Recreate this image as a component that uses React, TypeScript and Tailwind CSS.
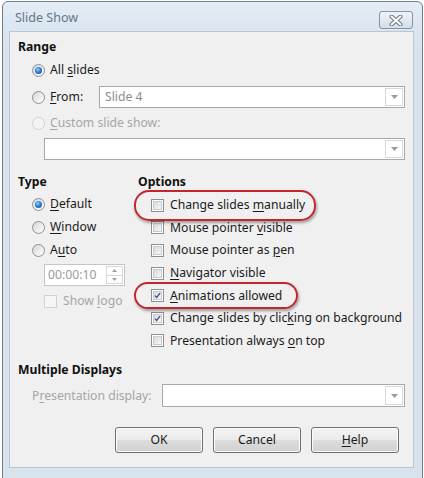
import React from 'react';

// Windows 7 style "Slide Show" dialog

const U = ({ children }: { children: React.ReactNode }) => <span className="underline underline-offset-2">{children}</span>;

function Radio({ checked, disabled, label }: { checked?: boolean; disabled?: boolean; label: React.ReactNode }) {
  return (
    <div className="flex items-center h-[22px]">
      <div
        className={`w-[13px] h-[13px] rounded-full border flex items-center justify-center ${
          disabled ? 'border-[#cfd2d4] bg-[#f4f4f4]' : 'border-[#8e9092] bg-[linear-gradient(135deg,#d6d6d6,#ffffff)]'
        }`}
      >
        {checked && (
          <div className="w-[7px] h-[7px] rounded-full bg-[radial-gradient(circle_at_40%_35%,#8fd0ff_0%,#2c7fd0_45%,#154f8e_100%)]" />
        )}
      </div>
      <span className={`ml-[5px] ${disabled ? 'text-[#a6a6a6]' : 'text-[#1b1b1b]'}`}>{label}</span>
    </div>
  );
}

function Check({ checked, disabled, label }: { checked?: boolean; disabled?: boolean; label: React.ReactNode }) {
  return (
    <div className="flex items-center h-[22.6px]">
      <div
        className={`w-[13px] h-[13px] border flex items-center justify-center ${
          disabled ? 'border-[#cfd2d4] bg-[#f6f6f6]' : 'border-[#8e9092] bg-white'
        }`}
      >
        <div
          className={`w-[9px] h-[9px] border flex items-center justify-center ${
            disabled ? 'border-transparent' : 'border-[#c6cbd1] bg-[linear-gradient(135deg,#d8d8d8,#f8f8f8)]'
          }`}
        >
          {checked && (
            <svg width="9" height="9" viewBox="0 0 9 9">
              <path d="M1.2 4.6 L3.4 7 L7.8 1.4" fill="none" stroke="#3b4f82" strokeWidth="1.6" />
            </svg>
          )}
        </div>
      </div>
      <span className={`ml-[6px] whitespace-nowrap ${disabled ? 'text-[#a6a6a6]' : 'text-[#1b1b1b]'}`}>{label}</span>
    </div>
  );
}

function Combo({ text, className }: { text?: string; className: string }) {
  return (
    <div className={`flex border border-[#a5a9ae] bg-white ${className}`}>
      <div className="flex-1 pl-[5px] flex items-center text-[#8c8c8c]">{text}</div>
      <div className="w-[18px] m-[1px] border border-[#d6d8da] flex items-center justify-center">
        <svg width="7" height="4" viewBox="0 0 7 4">
          <path d="M0 0 H7 L3.5 4 Z" fill="#9a9a9a" />
        </svg>
      </div>
    </div>
  );
}

function Btn({ children }: { children: React.ReactNode }) {
  return (
    <div className="w-[88px] h-[26px] rounded-[3px] border border-[#707070] bg-[linear-gradient(#f3f3f3_0%,#ebebeb_48%,#dddddd_52%,#d0d0d0_100%)] shadow-[inset_0_0_0_1px_#fbfbfb] flex items-center justify-center text-[#1b1b1b]">
      {children}
    </div>
  );
}

export default function App() {
  return (
    <div className="w-[424px] h-[478px] overflow-hidden bg-white pl-[2px] pt-[1px] font-['Noto_Sans',sans-serif] text-[12.2px]">
      <div className="w-[421px] h-[490px] rounded-t-[6px] border border-[#6f7d8c] bg-[linear-gradient(#e4ecf5,#d8e3ee_40px,#d8e3ee)] flex flex-col">
        {/* title bar */}
        <div className="h-[29px] flex items-start justify-between pl-[12px] pr-[9px]">
          <span className="text-[#66768a] text-[12.5px] mt-[7px]">Slide Show</span>
          <div className="w-[34px] h-[18px] rounded-[3px] border border-[#8894a3] bg-[linear-gradient(#eef3f8,#d4dde8)] flex items-center justify-center mt-[9px]">
            <svg width="14" height="11" viewBox="0 0 14 11">
              <path d="M2.5 1.5 L11.5 9.5 M11.5 1.5 L2.5 9.5" stroke="#6a7482" strokeWidth="4" strokeLinecap="round" />
              <path d="M2.5 1.5 L11.5 9.5 M11.5 1.5 L2.5 9.5" stroke="#ffffff" strokeWidth="2" strokeLinecap="round" />
            </svg>
          </div>
        </div>

        {/* content */}
        <div className="relative ml-[6px] w-[405px] h-[437px] border border-[#b9c6d3] bg-[#f0f0f0] px-[8px] pt-[6px]">
          <div className="h-[18px] leading-[18px] font-bold text-[#111]">Range</div>
          <div className="ml-[14px] mt-[3px]">
            <Radio checked label={<>All <U>s</U>lides</>} />
            <div className="flex items-center mt-[5px]">
              <div className="w-[67px]">
                <Radio label={<><U>F</U>rom:</>} />
              </div>
              <Combo text="Slide 4" className="flex-1 h-[22px]" />
            </div>
            <div className="mt-[4px]">
              <Radio disabled label={<><U>C</U>ustom slide show:</>} />
            </div>
            <Combo className="mt-[4px] ml-[12px] h-[22px]" />
          </div>

          <div className="flex mt-[13px]">
            <div className="w-[120px]">
              <div className="h-[18px] leading-[18px] font-bold text-[#111]">Type</div>
              <div className="ml-[14px] mt-[2px] flex flex-col gap-[1px]">
                <Radio checked label={<><U>D</U>efault</>} />
                <Radio label={<><U>W</U>indow</>} />
                <Radio label={<>A<U>u</U>to</>} />
              </div>
              <div className="ml-[26px] mt-[3px] w-[81px] h-[22px] flex border border-[#c2c6cb] bg-white">
                <div className="flex-1 pl-[3px] flex items-center text-[#9a9a9a]">00:00:10</div>
                <div className="w-[17px] m-[1px] flex flex-col border border-[#d6d8da]">
                  <div className="flex-1 flex items-center justify-center border-b border-[#d6d8da]">
                    <svg width="5" height="3" viewBox="0 0 5 3"><path d="M0 3 H5 L2.5 0 Z" fill="#a0a0a0" /></svg>
                  </div>
                  <div className="flex-1 flex items-center justify-center">
                    <svg width="5" height="3" viewBox="0 0 5 3"><path d="M0 0 H5 L2.5 3 Z" fill="#a0a0a0" /></svg>
                  </div>
                </div>
              </div>
              <div className="ml-[26px] mt-[4px]">
                <Check disabled label={<>Show <U>l</U>ogo</>} />
              </div>
            </div>

            <div className="flex-1">
              <div className="h-[18px] leading-[18px] font-bold text-[#111]">Options</div>
              <div className="ml-[13px] mt-[3px]">
                <Check label={<>Change slides <U>m</U>anually</>} />
                <Check label={<>Mouse pointer <U>v</U>isible</>} />
                <Check label={<>Mouse pointer as <U>p</U>en</>} />
                <Check label={<><U>N</U>avigator visible</>} />
                <Check checked label={<><U>A</U>nimations allowed</>} />
                <Check checked label={<>Change slides by clic<U>k</U>ing on background</>} />
                <Check label={<>Presentation always <U>o</U>n top</>} />
              </div>
            </div>
          </div>

          <div className="mt-[9px] h-[18px] leading-[18px] font-bold text-[#111]">Multiple Displays</div>
          <div className="flex items-center mt-[5px] ml-[14px]">
            <span className="w-[130px] text-[#a6a6a6]">P<U>r</U>esentation display:</span>
            <Combo className="flex-1 h-[23px]" />
          </div>

          <div className="flex justify-end gap-[10px] mt-[20px] pr-[6px]">
            <Btn>OK</Btn>
            <Btn>Cancel</Btn>
            <Btn><U>H</U>elp</Btn>
          </div>

          {/* red annotation marks */}
          <div className="absolute left-[124px] top-[158px] w-[182px] h-[31px] rounded-[15px] border-2 border-[#c42630] shadow-[1px_2px_3px_rgba(0,0,0,0.35)]" />
          <div className="absolute left-[124px] top-[250px] w-[164px] h-[27px] rounded-[14px] border-2 border-[#c42630] shadow-[1px_2px_3px_rgba(0,0,0,0.35)]" />
        </div>
      </div>
    </div>
  );
}
